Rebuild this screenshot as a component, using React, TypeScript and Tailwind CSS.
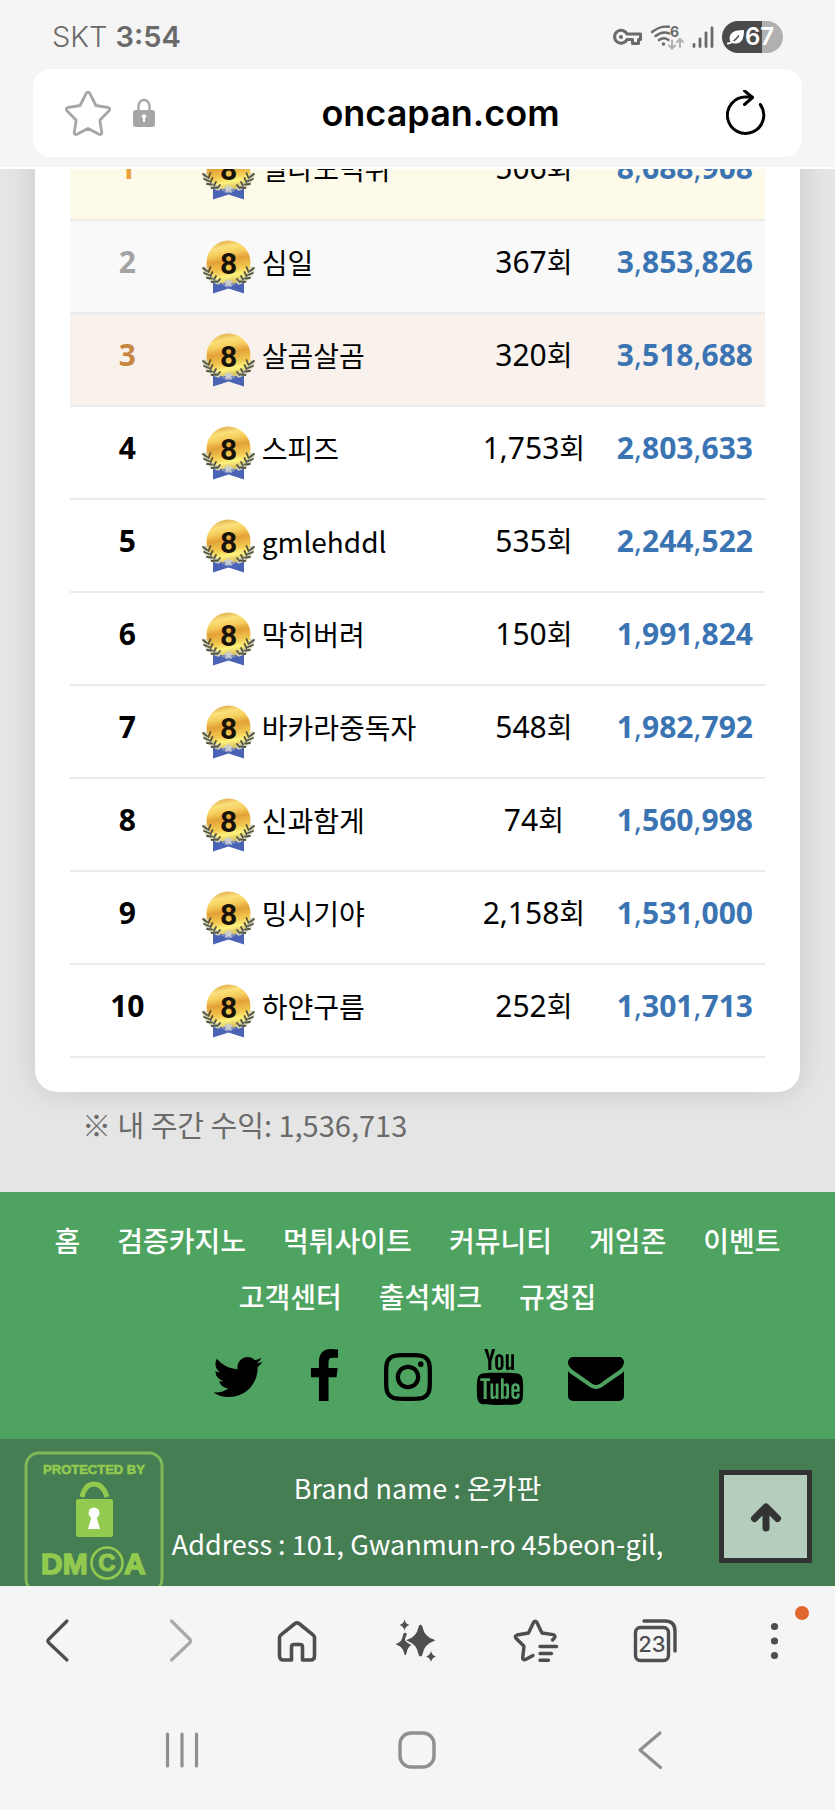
import type { ReactNode } from 'react';
import { FaInstagram } from 'react-icons/fa';
import { TfiYoutube } from 'react-icons/tfi';

const ranking = [
  { rank: 1, name: '빌라도먹튀', count: '506', amount: '8,688,908' },
  { rank: 2, name: '심일', count: '367', amount: '3,853,826' },
  { rank: 3, name: '살곰살곰', count: '320', amount: '3,518,688' },
  { rank: 4, name: '스피즈', count: '1,753', amount: '2,803,633' },
  { rank: 5, name: 'gmlehddl', count: '535', amount: '2,244,522' },
  { rank: 6, name: '막히버려', count: '150', amount: '1,991,824' },
  { rank: 7, name: '바카라중독자', count: '548', amount: '1,982,792' },
  { rank: 8, name: '신과함게', count: '74', amount: '1,560,998' },
  { rank: 9, name: '밍시기야', count: '2,158', amount: '1,531,000' },
  { rank: 10, name: '하얀구름', count: '252', amount: '1,301,713' },
];

const rowColors: Record<number, string> = {
  1: 'bg-[#fefaea]',
  2: 'bg-[#f9f9f9]',
  3: 'bg-[#f9f1ec]',
};

const rankColors: Record<number, string> = {
  1: 'text-[#eda33c]',
  2: 'text-[#a3a3a3]',
  3: 'text-[#c68642]',
};

const links = [
  '홈',
  '검증카지노',
  '먹튀사이트',
  '커뮤니티',
  '게임존',
  '이벤트',
  '고객센터',
  '출석체크',
  '규정집',
];

function Medal() {
  return (
    <svg viewBox="0 0 54 54" className="size-[54px] shrink-0" aria-hidden="true">
      <defs>
        <linearGradient id="gold" x1="0.1" y1="0" x2="0.3" y2="1">
          <stop offset="0" stopColor="#d99a3c" />
          <stop offset="0.2" stopColor="#fbe07a" />
          <stop offset="0.34" stopColor="#f6cf5e" />
          <stop offset="0.5" stopColor="#e3a136" />
          <stop offset="0.72" stopColor="#f2c850" />
          <stop offset="0.86" stopColor="#fdf27c" />
          <stop offset="1" stopColor="#d9c060" />
        </linearGradient>
      </defs>
      <path d="M12 38h31v15.500l-15.500-5-15.500 5z" fill="#4a63b4" />
      <circle cx="27.500" cy="22.500" r="22" fill="url(#gold)" />
      <path d="M20 44.500l7.500-3.500 7.500 3.500-7.500 3z" fill="#7d8cc0" />
      <g fill="none" strokeLinecap="round">
        <path d="M4 29q2.500 10 13 13M51 29q-2.500 10-13 13" stroke="#d3d4bd" strokeWidth="5" />
        <g stroke="#55543f" strokeWidth="1.800">
          <path d="M2 28l4 3M3 33l5 2M6 38l5 .5M10.500 42l5-.5M9.500 27l-2 5M11.500 32l-2 4M15 36l-2 3.500M19 39l-2.500 3" />
          <path d="M53 28l-4 3M52 33l-5 2M49 38l-5 .5M44.500 42l-5-.5M45.500 27l2 5M43.500 32l2 4M40 36l2 3.500M36 39l2.500 3" />
        </g>
      </g>
      <path d="M27.500 38l1.500 3 3.500.3-2.500 2.300.8 3.300-3.300-1.700-3.300 1.700.8-3.300-2.500-2.300 3.500-.3z" fill="#c9cdd0" />
      <text
        x="27.500"
        y="33.500"
        textAnchor="middle"
        fontSize="30"
        fontWeight="700"
        fill="#17120a"
        className="font-['Roboto',sans-serif]"
      >
        8
      </text>
    </svg>
  );
}

function StatusBar() {
  return (
    <div className="flex h-[69px] items-center justify-between px-[52px] pt-1 text-[#6a6a6a]">
      <div className="flex items-center gap-2 leading-9">
        <span className="text-[29px] font-light">SKT</span>
        <span className="text-[29px] font-semibold">3:54</span>
      </div>
      <div className="flex items-center gap-2">
        <svg viewBox="0 0 30 18" className="h-[18px] w-[30px]" fill="none" stroke="#6a6a6a" strokeWidth="3">
          <path d="M15 6h13.500v5.500h-2v4h-6v-4H15a6.500 6.500 0 1 1 0-5.500z" strokeLinejoin="round" />
          <circle cx="9" cy="9" r="2" fill="#6a6a6a" stroke="none" />
        </svg>
        <svg viewBox="0 0 34 32" className="h-8 w-[34px]" fill="none" strokeLinecap="round">
          <g stroke="#6a6a6a" strokeWidth="2.400">
            <path d="M2 11q8-6.500 17-5.200" />
            <path d="M5.500 15q7-5.500 14-2.500" />
            <path d="M9 19q5-3.500 9.500 0" />
          </g>
          <circle cx="13.500" cy="23" r="1.800" fill="#6a6a6a" />
          <text x="20" y="15.500" fontSize="14" fontWeight="700" fill="#6a6a6a">
            6
          </text>
          <path d="M22 19.500v8m-3-3l3 3 3-3M30 26v-8m-3 3l3-3 3 3" stroke="#b0b0b0" strokeWidth="2" />
        </svg>
        <svg viewBox="0 0 22 24" className="h-6 w-[22px]" stroke="#6a6a6a" strokeWidth="2.800" strokeLinecap="round">
          <path d="M2 19.500v2M8 14v7.500M14 8v13.500M20 3v18.500" />
        </svg>
        <div className="flex h-8 w-[61px] items-center rounded-full bg-[linear-gradient(to_right,#4a4a4a_66%,#b0b0b0_66%)] pl-[5px] text-white">
          <svg viewBox="0 0 18 18" className="h-[18px] w-[18px] shrink-0">
            <path d="M3 13C1 5 7 2 17 2c0 8-2 14-9 13.500-2 0-3-.6-3-.6z" fill="#fff" />
            <path d="M1 15.500q6-1 11-8" fill="none" stroke="#4a4a4a" strokeWidth="1.300" />
            <path d="M1 15.500q3-.5 5-2" fill="none" stroke="#fff" strokeWidth="2" strokeLinecap="round" />
          </svg>
          <span className="text-2xl leading-8 font-semibold">67</span>
        </div>
      </div>
    </div>
  );
}

function AddressBar() {
  return (
    <div className="mx-[33px] flex h-[88px] items-center rounded-[18px] bg-white pr-9 pl-8">
      <div className="flex items-center gap-[22px]">
        <button type="button" aria-label="북마크">
          <svg viewBox="0 0 46 46" className="size-[46px]" fill="none" stroke="#a6a6a6" strokeWidth="2.800" strokeLinejoin="round">
            <path d="M21.300 3.200q1.700-2.200 3.400 0l6.200 12.300 12.200 2q2.800.9 1 3.200l-9.300 9.600 2 12.300q-.3 2.600-2.800 1.600L23 38.400l-11 5.800q-2.500 1-2.800-1.600l2-12.300-9.300-9.600q-1.800-2.300 1-3.200l12.200-2z" />
          </svg>
        </button>
        <svg viewBox="0 0 22 30" className="h-[30px] w-[22px]">
          <path d="M5.500 13V8a5.500 6 0 0 1 11 0v5" fill="none" stroke="#a6a6a6" strokeWidth="2.400" />
          <rect y="12" width="22" height="17" rx="3" fill="#a6a6a6" />
          <circle cx="11" cy="18.500" r="2.200" fill="#fff" />
          <path d="M10 19h2v5h-2z" fill="#fff" />
        </svg>
      </div>
      <div className="flex-1 text-center text-[36px] leading-11 font-semibold text-black">oncapan.com</div>
      <button type="button" aria-label="새로고침">
        <svg viewBox="0 0 40 46" className="h-[46px] w-10" fill="none" stroke="#000" strokeWidth="3" strokeLinecap="round" strokeLinejoin="round">
          <path d="M34.300 14.500A18.200 18.200 0 1 1 20 7h6" />
          <path d="M18.500 .8l8 6.700-8 7" />
        </svg>
      </button>
    </div>
  );
}

function Amount({ value }: { value: string }) {
  return (
    <>
      {value.split(',').map((part, i) => (
        <span key={i}>
          {i > 0 && <span className="font-normal">,</span>}
          {part}
        </span>
      ))}
    </>
  );
}

function RankingTable() {
  return (
    <table className="w-full table-fixed border-collapse font-['Noto_Sans','Noto_Sans_CJK_KR',sans-serif] text-[30px] leading-9 text-black">
      <colgroup>
        <col className="w-[16.5%]" />
        <col className="w-[41.5%]" />
        <col className="w-[17.5%]" />
        <col className="w-[24.5%]" />
      </colgroup>
      <tbody>
        {ranking.map((r) => (
          <tr key={r.rank} className={`h-[93px] border-b-2 border-[#ebebeb] ${rowColors[r.rank] ?? ''}`}>
            <td className={`pb-[10px] text-center font-bold ${rankColors[r.rank] ?? ''}`}>{r.rank}</td>
            <td className="p-0">
              <div className="flex items-center gap-[7px] pl-4">
                <Medal />
                <span className="pb-[10px] font-['Noto_Sans_CJK_KR',sans-serif] text-[28px] whitespace-nowrap">{r.name}</span>
              </div>
            </td>
            <td className="pb-[10px] text-center whitespace-nowrap">
              {r.count}
              <span className="text-[28px]">회</span>
            </td>
            <td className="pr-3 pb-[10px] text-right font-bold text-[#3b74b3]">
              <Amount value={r.amount} />
            </td>
          </tr>
        ))}
      </tbody>
    </table>
  );
}

function Glyph({ viewBox, className, d }: { viewBox: string; className: string; d: string }) {
  return (
    <svg viewBox={viewBox} className={className} fill="currentColor" aria-hidden="true">
      <path d={d} />
    </svg>
  );
}

function Footer() {
  return (
    <footer className="font-['Noto_Sans_CJK_KR',sans-serif] leading-[56px] text-white">
      <div className="bg-[#4ea360] px-9 pt-5 pb-[34px]">
        <nav className="flex flex-wrap justify-center gap-x-[37px] text-[28px] font-medium">
          {links.map((l) => (
            <a key={l} href="#">
              {l}
            </a>
          ))}
        </nav>
        <div className="mt-[25px] flex justify-center gap-11 text-black">
          <a href="#" aria-label="Twitter">
            <Glyph
              viewBox="64 0 1664 1792"
              className="h-14 w-[52px]"
              d="M1684 408q-67 98-162 167 1 14 1 42 0 130-38 259.500t-115.500 248.500-184.500 210.500-258 146-323 54.500q-271 0-496-145 35 4 78 4 225 0 401-138-105-2-188-64.500t-114-159.500q33 5 61 5 43 0 85-11-112-23-185.500-111.500t-73.500-205.500v-4q68 38 146 41-66-44-105-115t-39-154q0-88 44-163 121 149 294.500 238.500t371.500 99.500q-8-38-8-74 0-134 94.500-228.500t228.500-94.500q140 0 236 102 109-21 205-78-37 115-142 178 93-10 186-50z"
            />
          </a>
          <a href="#" aria-label="Facebook">
            <Glyph
              viewBox="384 0 1024 1792"
              className="h-14 w-8"
              d="M1343 12v264h-157q-86 0-116 36t-30 108v189h293l-39 296h-254v759h-306v-759h-255v-296h255v-218q0-186 104-288.500t277-102.500q147 0 228 12z"
            />
          </a>
          <a href="#" aria-label="Instagram" className="flex items-center">
            <FaInstagram className="h-14 w-12" />
          </a>
          <a href="#" aria-label="YouTube" className="-mx-1 flex items-center">
            <TfiYoutube className="size-14" />
          </a>
          <a href="#" aria-label="Email">
            <Glyph
              viewBox="0 0 1792 1792"
              className="size-14"
              d="M1792 710v794q0 66-47 113t-113 47h-1472q-66 0-113-47t-47-113v-794q44 49 101 87 362 246 497 345 57 42 92.500 65.500t94.500 48 110 24.500h2q51 0 110-24.500t94.500-48 92.500-65.500q170-123 498-345 57-39 100-87zm0-294q0 79-49 151t-122 123q-376 261-468 325-10 7-42.500 31t-54 38.500-52 32.500-57.500 27-50 9h-2q-23 0-50-9t-57.500-27-52-32.500-54-38.500-42.500-31q-91-64-262-182.500t-205-142.500q-62-42-117-115.500t-55-136.500q0-78 41.500-130t118.500-52h1472q65 0 112.500 47t47.500 113z"
            />
          </a>
        </div>
      </div>

      <div className="relative h-[147px] overflow-hidden bg-[#467e54] pt-[21px] text-center text-[27px]">
        <p>Brand name : 온카판</p>
        <p>Address : 101, Gwanmun-ro 45beon-gil,</p>

        <svg viewBox="0 0 140 144" className="absolute top-3 left-6 h-36 w-[140px] font-['Liberation_Sans',sans-serif]">
          <rect x="2" y="2" width="136" height="139" rx="13" fill="none" stroke="#7fb958" strokeWidth="3" />
          <g fill="#92c94f" stroke="#92c94f">
            <text x="70" y="23" textAnchor="middle" fontSize="13" fontWeight="700" strokeWidth="0.600">
              PROTECTED BY
            </text>
            <text x="17" y="123" fontSize="30" fontWeight="700" strokeWidth="1.500">
              DM
            </text>
            <text x="83" y="120" textAnchor="middle" fontSize="24" fontWeight="700" strokeWidth="1">
              C
            </text>
            <text x="100" y="123" fontSize="30" fontWeight="700" strokeWidth="1.500">
              A
            </text>
          </g>
          <circle cx="83" cy="112" r="15.500" fill="none" stroke="#92c94f" strokeWidth="2.600" />
          <path d="M58 46q3-13 12-13t13 13" fill="none" stroke="#92c94f" strokeWidth="5" />
          <rect x="52" y="48" width="37" height="38" rx="2" fill="#92c94f" />
          <circle cx="70" cy="62" r="5.500" fill="#fff" />
          <path d="M68 64h4l4 14H64z" fill="#fff" />
        </svg>

        <button
          type="button"
          aria-label="맨 위로"
          className="absolute top-[31px] right-[23px] flex size-[93px] items-center justify-center border-[5px] border-[#333] bg-[#b5cdbd]"
        >
          <svg viewBox="0 0 32 30" className="h-[30px] w-8" fill="none" stroke="#333" strokeWidth="7" strokeLinecap="round" strokeLinejoin="round">
            <path d="M4.500 16.500L16 5l11.500 11.500M16 7v19" />
          </svg>
        </button>
      </div>
    </footer>
  );
}

function ToolButton({ label, children }: { label: string; children: ReactNode }) {
  return (
    <button type="button" aria-label={label} className="relative flex flex-1 items-center justify-center">
      {children}
    </button>
  );
}

function BrowserToolbar() {
  return (
    <div className="flex h-[110px] text-[#4e4e51]">
      <ToolButton label="뒤로">
        <svg viewBox="0 0 48 48" className="size-12" fill="none" stroke="currentColor" strokeWidth="3.200" strokeLinecap="round" strokeLinejoin="round">
          <path d="M31 4L12.500 22.500q-1.300 1.500 0 3L31 43" />
        </svg>
      </ToolButton>
      <ToolButton label="앞으로">
        <svg viewBox="0 0 48 48" className="size-12" fill="none" stroke="#a9a9aa" strokeWidth="3.200" strokeLinecap="round" strokeLinejoin="round">
          <path d="M16.500 4L35 22.500q1.300 1.500 0 3L16.500 43" />
        </svg>
      </ToolButton>
      <ToolButton label="홈 화면">
        <svg viewBox="0 0 48 48" className="size-12" fill="none" stroke="currentColor" strokeWidth="3.600" strokeLinecap="round" strokeLinejoin="round">
          <path d="M5.500 20.500q0-1.500 1.500-2.700L21 6.500q2-1.300 4 0l14 11.300q1.500 1.200 1.500 2.700V39q0 4-4 4h-8V30q0-2.500-2.500-2.500h-6Q17.500 27.500 17.500 30v13h-8q-4 0-4-4z" />
        </svg>
      </ToolButton>
      <ToolButton label="AI">
        <svg viewBox="0 0 48 48" className="size-12" fill="currentColor">
          <path d="M27.500 7.500q1.500 0 2 2.500 2 10 11.500 12.500 2 .8 0 1.600-9.500 3-11.500 12.900-.5 2.500-2 2.500t-2-2.500q-2-9.900-11-12.900-2-.8 0-1.600 9-2.500 11-12.500.5-2.500 2-2.500z" />
          <path d="M14 17q-2 4-2 6.500 2.500 3 6.500 4.500-4 2-5 8-1 4.500-2.500 0-1-6-7-8-2-.7 0-1.500 5-1.700 6-8.500 1-4 4-1z" />
          <path d="M11.500 2.500q1 4.500 5 5.500-4 1-5 5.500-1-4.500-5-5.500 4-1 5-5.500zM38 34q1 4.500 5 5.500-4 1-5 5.500-1-4.500-5-5.500 4-1 5-5.500z" />
        </svg>
      </ToolButton>
      <ToolButton label="북마크 목록">
        <svg viewBox="0 0 48 48" className="size-12" fill="none" stroke="currentColor" strokeWidth="3.400" strokeLinecap="round" strokeLinejoin="round">
          <path d="M39.500 23l2-2.200q1.500-2.300-1.300-3.200L29 16 23.800 5.300q-1.600-2.300-3.200 0L15.500 16 4 18q-2.800.9-1 3.200l8 8-1.300 11.500q.3 2.800 2.800 1.800l7.500-4" />
          <path d="M27 29.500h16.500M27 36.500h11.500M27 43.200h8.500" />
        </svg>
      </ToolButton>
      <ToolButton label="탭 23">
        <svg viewBox="0 0 48 48" className="size-12" fill="none" stroke="currentColor" strokeWidth="3.400" strokeLinecap="round">
          <rect x="3.500" y="10.500" width="33" height="33" rx="5" />
          <path d="M12 4h21q10 0 10 10v20" />
          <text x="20" y="35" textAnchor="middle" fontSize="22" fontWeight="500" fill="currentColor" stroke="none">
            23
          </text>
        </svg>
      </ToolButton>
      <ToolButton label="메뉴">
        <svg viewBox="0 0 48 48" className="size-12" fill="currentColor">
          <circle cx="23.500" cy="9.500" r="3.600" />
          <circle cx="23.500" cy="24" r="3.600" />
          <circle cx="23.500" cy="38.500" r="3.600" />
        </svg>
        <span className="absolute top-5 right-[26px] size-[14px] rounded-full bg-[#e0672c]" />
      </ToolButton>
    </div>
  );
}

function SystemNav() {
  return (
    <div className="flex h-28 px-16 pb-1 text-[#8f8f8f]">
      <ToolButton label="최근 앱">
        <svg viewBox="0 0 40 40" className="size-10" stroke="currentColor" strokeWidth="3.200" strokeLinecap="round">
          <path d="M5.500 4v32M20 4v32M34.500 4v32" />
        </svg>
      </ToolButton>
      <ToolButton label="홈">
        <svg viewBox="0 0 40 40" className="size-10" fill="none" stroke="currentColor" strokeWidth="3.400">
          <rect x="2" y="3" width="34" height="34" rx="11" />
        </svg>
      </ToolButton>
      <ToolButton label="이전">
        <svg viewBox="0 0 40 40" className="size-10" fill="none" stroke="currentColor" strokeWidth="3.200" strokeLinecap="round" strokeLinejoin="round">
          <path d="M27 3L7 20l20.500 17.500" />
        </svg>
      </ToolButton>
    </div>
  );
}

export default function App() {
  return (
    <div className="flex min-h-screen flex-col bg-[#f5f5f5] font-['Inter','Noto_Sans_CJK_KR',sans-serif]">
      <header className="bg-[#f5f5f5] pb-[10px]">
        <StatusBar />
        <AddressBar />
      </header>

      <main className="overflow-hidden border-t-2 border-white bg-[#e5e5e5]">
        <div className="mx-[35px] -mt-[42px] rounded-b-[22px] bg-white px-[35px] pb-[34px] shadow-[0_0_30px_rgba(0,0,0,0.13)]">
          <RankingTable />
        </div>
        <p className="px-[82px] pt-3 pb-12 font-['Noto_Sans_CJK_KR',sans-serif] text-[29px] leading-10 text-[#6b6b6b]">
          ※ 내 주간 수익: 1,536,713
        </p>
      </main>

      <Footer />
      <BrowserToolbar />
      <SystemNav />
    </div>
  );
}
